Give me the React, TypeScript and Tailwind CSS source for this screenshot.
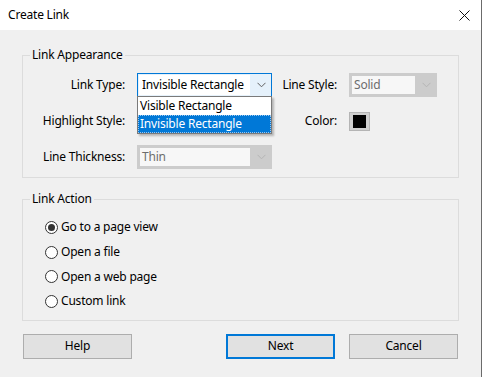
import React from "react";

function Chevron({ color }: { color: string }) {
  return (
    <svg width="9" height="6" viewBox="0 0 9 6" fill="none">
      <polyline points="0.5,0.8 4.5,4.8 8.5,0.8" stroke={color} strokeWidth="1" />
    </svg>
  );
}

function DisabledCombo({ text, w }: { text: string; w: string }) {
  return (
    <div className={`flex h-[24px] ${w} border border-[#cccccc] bg-[#cccccc]`}>
      <div className="m-[2px] flex flex-1 items-center bg-[#f7f7f7] pl-[2px] text-[#6d6d6d]">{text}</div>
      <div className="flex w-[19px] items-center justify-center">
        <Chevron color="#b4b4b4" />
      </div>
    </div>
  );
}

function Radio({ checked, label }: { checked?: boolean; label: string }) {
  return (
    <div className="flex h-[24.7px] items-center gap-[3px]">
      <div className="flex h-[13px] w-[13px] items-center justify-center rounded-full border border-[#333333] bg-white">
        {checked && <div className="h-[7px] w-[7px] rounded-full bg-[#333333]" />}
      </div>
      <span>{label}</span>
    </div>
  );
}

function Button({ label, primary }: { label: string; primary?: boolean }) {
  return (
    <div
      className={`flex h-[25px] w-[109px] items-center justify-center bg-[#e1e1e1] ${
        primary ? "border-2 border-[#0078d7]" : "border border-[#adadad]"
      }`}
    >
      {label}
    </div>
  );
}

export default function App() {
  return (
    <div className="flex h-[377px] w-[482px] flex-col border-r border-[#6b6b6b] bg-[#f0f0f0] font-['Noto_Sans',sans-serif] text-[12px] leading-[16px] tracking-[-0.2px] text-black">
      {/* Title bar */}
      <div className="flex h-[30px] shrink-0 items-center justify-between bg-white pl-[8px] pr-[11px]">
        <span className="text-[12px]">Create Link</span>
        <svg width="11" height="11" viewBox="0 0 11 11" fill="none">
          <path d="M0.5 0.5 L10.5 10.5 M10.5 0.5 L0.5 10.5" stroke="#111" strokeWidth="1" />
        </svg>
      </div>

      <div className="flex flex-col px-[22px] pt-[17px]">
        {/* Link Appearance */}
        <fieldset className="border border-[#dcdcdc] pb-[8px] pt-[10px]">
          <legend className="ml-[7px] px-[2px]">Link Appearance</legend>
          <div className="grid grid-cols-[102px_135px_53px_88px] grid-rows-[24px_24px_24px] gap-x-[12px] gap-y-[12px]">
            <div className="flex items-center justify-end whitespace-nowrap">Link Type:</div>
            <div className="relative z-10">
              <div className="flex h-[24px] border border-[#0078d7] bg-[#e5f1fb]">
                <div className="m-[1px] flex flex-1 items-center bg-white pl-[3px]">Invisible Rectangle</div>
                <div className="flex w-[20px] items-center justify-center">
                  <Chevron color="#606060" />
                </div>
              </div>
              <div className="absolute left-0 top-[23px] w-[135px] border border-[#7a7a7a] bg-white shadow-[2px_2px_2px_rgba(0,0,0,0.25)]">
                <div className="flex h-[18px] items-center pl-[2px]">Visible Rectangle</div>
                <div className="flex h-[18px] items-center border border-dotted border-[#9cc7ee] bg-[#0078d7] pl-[1px] text-white">
                  Invisible Rectangle
                </div>
              </div>
            </div>
            <div className="flex items-center justify-end whitespace-nowrap">Line Style:</div>
            <DisabledCombo text="Solid" w="w-[88px]" />

            <div className="flex items-center justify-end whitespace-nowrap">Highlight Style:</div>
            <DisabledCombo text="" w="w-[135px]" />
            <div className="flex items-center justify-end whitespace-nowrap">Color:</div>
            <div className="flex items-center">
              <div className="flex h-[19px] w-[21px] items-center justify-center border border-[#b4b4b4] bg-[#cfcfcf]">
                <div className="h-[13px] w-[13px] bg-black" />
              </div>
            </div>

            <div className="flex items-center justify-end whitespace-nowrap">Line Thickness:</div>
            <DisabledCombo text="Thin" w="w-[135px]" />
            <div />
            <div />
          </div>
        </fieldset>

        {/* Link Action */}
        <fieldset className="mt-[13px] border border-[#dcdcdc] pb-[6px] pt-[8px]">
          <legend className="ml-[7px] px-[2px]">Link Action</legend>
          <div className="flex flex-col pl-[22px]">
            <Radio checked label="Go to a page view" />
            <Radio label="Open a file" />
            <Radio label="Open a web page" />
            <Radio label="Custom link" />
          </div>
        </fieldset>

        {/* Buttons */}
        <div className="mt-[13px] flex px-[1px]">
          <Button label="Help" />
          <div className="flex-1" />
          <Button label="Next" primary />
          <div className="w-[14px]" />
          <Button label="Cancel" />
        </div>
      </div>
    </div>
  );
}
